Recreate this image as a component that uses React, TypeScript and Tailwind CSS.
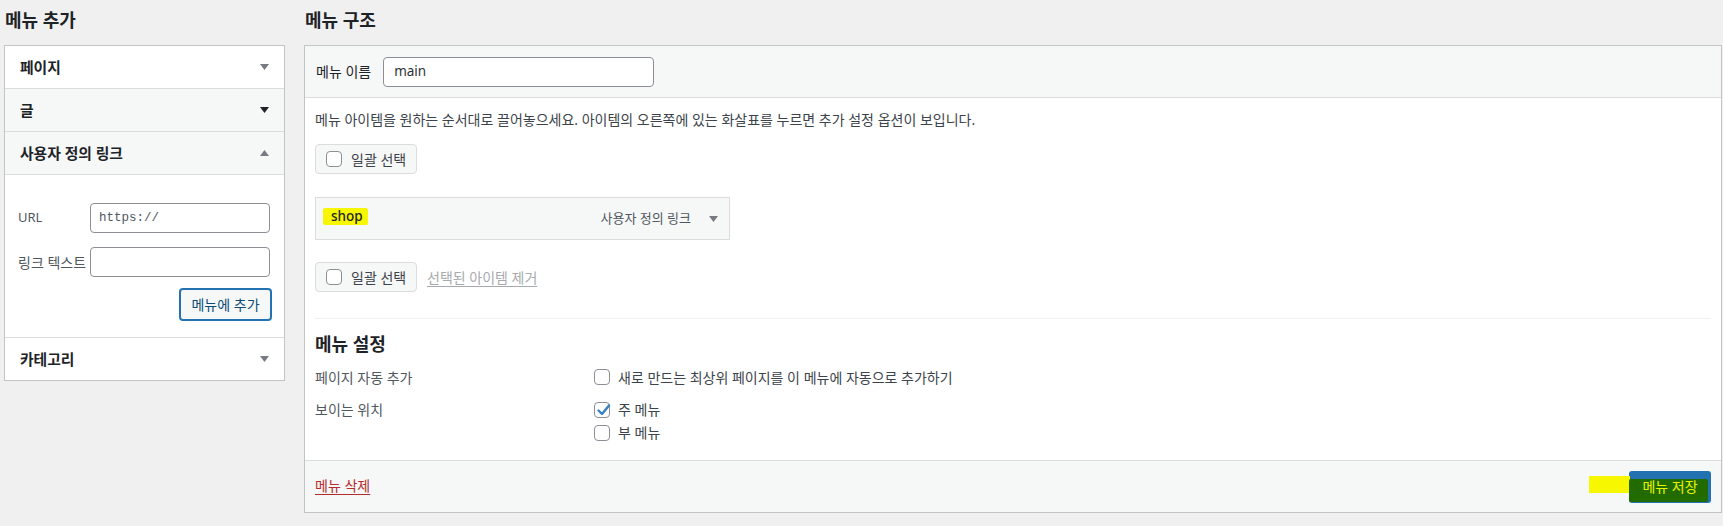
import React from "react";

const Tri = ({ up = false, color = "#787c82" }: { up?: boolean; color?: string }) => (
  <svg width="9" height="6" viewBox="0 0 9 6" className="shrink-0">
    <polygon points={up ? "0,6 9,6 4.5,0" : "0,0 9,0 4.5,6"} fill={color} />
  </svg>
);

const Box = ({ checked = false }: { checked?: boolean }) => (
  <span className="relative w-4 h-4 shrink-0 rounded-[4px] border border-[#8c8f94] bg-white flex items-center justify-center">
    {checked && (
      <svg width="16" height="16" viewBox="0 0 16 16" className="absolute left-[1px] top-[-1px]">
        <path d="M2.5 8.5 L6 12 L13 3.5" fill="none" stroke="#3582c4" strokeWidth="2.4" strokeLinecap="round" strokeLinejoin="round" />
      </svg>
    )}
  </span>
);

const AccRow = ({ label, up = false, color = "#787c82", bg = "bg-white", border = true }: { label: string; up?: boolean; color?: string; bg?: string; border?: boolean }) => (
  <div className={`${border ? "h-[43px] border-b border-[#dcdcde]" : "h-[42px]"} ${bg} flex items-center justify-between pl-[15px] pr-[15px] font-semibold text-[14.8px] text-[#1d2327]`}>
    <span>{label}</span>
    <Tri up={up} color={color} />
  </div>
);

const BulkButton = () => (
  <div className="h-[30px] w-[102px] border border-[#dcdcde] rounded-[4px] bg-[#f6f7f7] flex items-center pl-[10px] gap-[9px] text-[14px] text-[#3c434a]">
    <Box />
    <span>일괄 선택</span>
  </div>
);

export default function App() {
  return (
    <div className="w-[1723px] h-[526px] bg-[#f0f0f1] flex items-start font-['Noto_Sans','Noto_Sans_CJK_KR',sans-serif] text-[14px] text-[#3c434a]">
      {/* Left column */}
      <div className="ml-[4px] w-[281px] shrink-0">
        <div className="h-[45px] pl-[1px] pt-[9px] text-[18px] font-semibold leading-[23px] text-[#1d2327]">메뉴 추가</div>
        <div className="border border-[#c3c4c7] bg-white">
          <AccRow label="페이지" />
          <AccRow label="글" bg="bg-[#f6f7f7]" color="#1d2327" />
          <AccRow label="사용자 정의 링크" bg="bg-[#f6f7f7]" up />
          <div className="h-[163px] border-b border-[#dcdcde] pt-[28px] pl-[13px] pr-[14px] flex flex-col">
            <div className="flex items-center h-[30px]">
              <span className="w-[72px] text-[13px] text-[#50575e]">URL</span>
              <div className="w-[180px] h-[30px] border border-[#8c8f94] rounded-[4px] bg-white flex items-center pl-[8px] font-['Liberation_Mono',monospace] text-[12.5px] text-[#50575e]">https://</div>
            </div>
            <div className="flex items-center h-[30px] mt-[14px]">
              <span className="w-[72px] text-[#50575e] whitespace-nowrap">링크 텍스트</span>
              <div className="w-[180px] h-[30px] border border-[#8c8f94] rounded-[4px] bg-white"></div>
            </div>
            <div className="mt-[12px] flex justify-end">
              <div className="h-[31px] w-[91px] mr-[-1px] border border-[#2271b1] shadow-[0_0_0_1px_#2271b1] rounded-[3px] bg-[#f6f7f7] flex items-center justify-center text-[#0a4b78]">메뉴에 추가</div>
            </div>
          </div>
          <AccRow label="카테고리" border={false} />
        </div>
      </div>

      {/* Right column */}
      <div className="ml-[19px] w-[1418px] shrink-0">
        <div className="h-[45px] pl-[1px] pt-[9px] text-[18px] font-semibold leading-[23px] text-[#1d2327]">메뉴 구조</div>
        <div className="border border-[#c3c4c7] bg-white">
          {/* header */}
          <div className="h-[52px] bg-[#f6f7f7] border-b border-[#dcdcde] flex items-center pl-[11px]">
            <span className="text-[#1d2327]">메뉴 이름</span>
            <div className="ml-[12px] w-[271px] h-[30px] border border-[#8c8f94] rounded-[4px] bg-white flex items-center pl-[10px] text-[13.5px] text-[#2c3338]">main</div>
          </div>
          {/* body */}
          <div className="px-[10px] pt-[12px] pb-[16px]">
            <p className="leading-[20px]">메뉴 아이템을 원하는 순서대로 끌어놓으세요. 아이템의 오른쪽에 있는 화살표를 누르면 추가 설정 옵션이 보입니다.</p>
            <div className="mt-[14px]"><BulkButton /></div>
            <div className="mt-[23px] w-[415px] h-[43px] border border-[#dcdcde] bg-[#f6f7f7] flex items-center justify-between pl-[7px] pr-[11px]">
              <span className="inline-flex items-center h-[17px] mt-[-5px] pl-[8px] pr-[5px] bg-[#f7f700] rounded-[2px] font-medium text-[13.5px] text-[#1d2327] leading-[17px]">shop</span>
              <span className="flex items-center gap-[18px]">
                <span className="text-[13px] text-[#50575e]">사용자 정의 링크</span>
                <Tri />
              </span>
            </div>
            <div className="mt-[22px] flex items-center gap-[10px]">
              <BulkButton />
              <span className="text-[#a7aaad] underline underline-offset-[3px]">선택된 아이템 제거</span>
            </div>
            <div className="mt-[26px] border-t border-[#f0f0f1]"></div>
            <div className="pt-[14px] text-[18px] font-semibold leading-[23px] text-[#1d2327]">메뉴 설정</div>
            <div className="mt-[11px] flex items-center h-[20px]">
              <span className="w-[279px] text-[#50575e]">페이지 자동 추가</span>
              <span className="flex items-center gap-[8px] text-[#3c434a]"><Box /> 새로 만드는 최상위 페이지를 이 메뉴에 자동으로 추가하기</span>
            </div>
            <div className="mt-[11px] flex items-start">
              <span className="w-[279px] leading-[23px] text-[#50575e]">보이는 위치</span>
              <div className="flex flex-col">
                <span className="h-[23px] flex items-center gap-[8px]"><Box checked /> 주 메뉴</span>
                <span className="h-[23px] flex items-center gap-[8px]"><Box /> 부 메뉴</span>
              </div>
            </div>
          </div>
          {/* footer */}
          <div className="h-[52px] border-t border-[#dcdcde] bg-[#f6f7f7] flex items-center justify-between px-[10px]">
            <span className="mb-[3px] text-[#b32d2e] underline underline-offset-[3px]">메뉴 삭제</span>
            <div className="relative h-[32px] w-[82px] rounded-[3px] bg-[#2271b1]">
              <span className="absolute left-[-40px] top-[5px] w-[41px] h-[17px] bg-[#f7f700]"></span>
              <span className="absolute left-0 top-[8px] w-[79px] h-[23px] bg-[#226b00] rounded-[2px]"></span>
              <span className="absolute inset-0 flex items-center justify-center text-[#e6f500]">메뉴 저장</span>
            </div>
          </div>
        </div>
      </div>
    </div>
  );
}
